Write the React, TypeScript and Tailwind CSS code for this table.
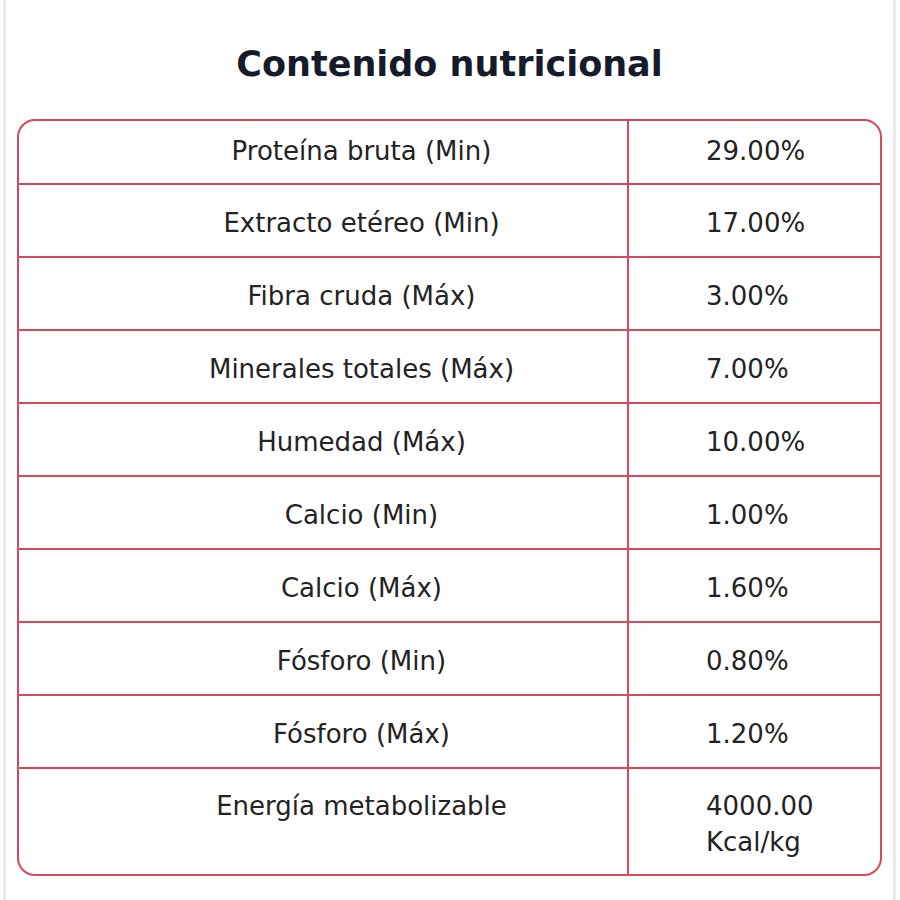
const rows = [
  { label: 'Proteína bruta (Min)', value: ['29.00%'] },
  { label: 'Extracto etéreo (Min)', value: ['17.00%'] },
  { label: 'Fibra cruda (Máx)', value: ['3.00%'] },
  { label: 'Minerales totales (Máx)', value: ['7.00%'] },
  { label: 'Humedad (Máx)', value: ['10.00%'] },
  { label: 'Calcio (Min)', value: ['1.00%'] },
  { label: 'Calcio (Máx)', value: ['1.60%'] },
  { label: 'Fósforo (Min)', value: ['0.80%'] },
  { label: 'Fósforo (Máx)', value: ['1.20%'] },
  { label: 'Energía metabolizable', value: ['4000.00', 'Kcal/kg'] },
];

export default function App() {
  return (
    <div className="w-[900px] h-[900px] bg-white pl-[3px] pr-[4px]" style={{ fontFamily: '"DejaVu Sans", "Noto Sans", sans-serif' }}>
      <div className="h-full border-x-[3px] border-[#ebebeb] px-[11px]">
        {/* Title */}
        <h2 className="pt-[42px] h-[119px] text-center text-[35px] leading-[44px] font-bold text-[#161b2b]">
          Contenido nutricional
        </h2>

        {/* Table */}
        <div className="border-2 border-[#d84a5b] rounded-[18px] overflow-hidden text-[26px] leading-[36px] text-[#232323]">
          {rows.map((row, i) => {
            const first = i === 0;
            const last = i === rows.length - 1;
            const h = first ? 'h-[62px] pt-[12px]' : last ? 'h-[105px] pt-[19px]' : 'h-[71px] pt-[20px]';
            return (
              <div
                key={row.label}
                className={`grid grid-cols-[610px_1fr] ${first ? '' : 'border-t-2 border-[#d84a5b]'}`}
              >
                <div className={`${h} border-r-2 border-[#d84a5b] pl-[77px] text-center`}>{row.label}</div>
                <div className={`${h} pl-[77px] text-left`}>
                  {row.value.map(v => (
                    <div key={v}>{v}</div>
                  ))}
                </div>
              </div>
            );
          })}
        </div>
      </div>
    </div>
  );
}
